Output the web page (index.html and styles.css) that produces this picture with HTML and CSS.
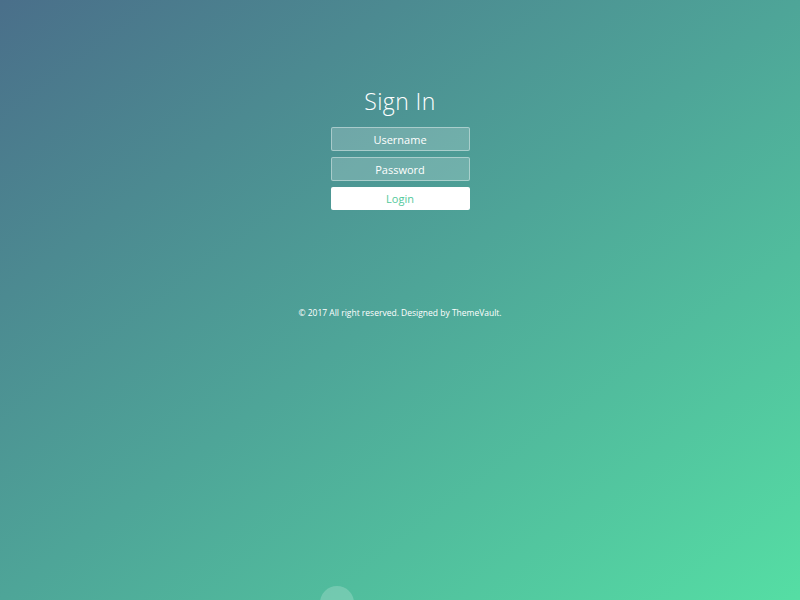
FILE: index.html
```html
<!DOCTYPE html>
<html lang="en">
<head>
<meta charset="utf-8">
<title>Sign In</title>
<link rel="stylesheet" href="styles.css">
</head>
<body>
<div class="page">
  <div class="container">
    <h1 class="title">Sign In</h1>
    <form class="form">
      <input class="field" type="text" placeholder="Username">
      <input class="field" type="password" placeholder="Password">
      <button class="login" type="button">Login</button>
    </form>
    <p class="footer">© 2017 All right reserved. Designed by ThemeVault.</p>
  </div>
  <span class="bubble"></span>
</div>
</body>
</html>
```

FILE: styles.css
```css
html, body {
  margin: 0;
  padding: 0;
  height: 100%;
}
body {
  font-family: "Open Sans", "Lato", sans-serif;
  color: #fff;
}
.page {
  position: relative;
  height: 600px;
  overflow: hidden;
  background: linear-gradient(to bottom right, #4a6f8a 0%, #4ea598 50%, #55dea4 100%);
}
.container {
  display: flex;
  flex-direction: column;
  align-items: center;
  padding-top: 85px;
}
.title {
  margin: 0 0 10px;
  font-size: 23px;
  font-weight: 300;
  line-height: 32px;
  letter-spacing: 0.4px;
}
.form {
  display: flex;
  flex-direction: column;
  gap: 6px;
  width: 139px;
}
.field {
  box-sizing: border-box;
  height: 24px;
  width: 100%;
  padding: 0 8px;
  border: 1px solid rgba(255,255,255,0.4);
  border-radius: 2px;
  background: rgba(255,255,255,0.2);
  font-family: inherit;
  font-size: 11px;
  color: #fff;
  text-align: center;
  outline: none;
}
.field::placeholder {
  color: #fff;
  opacity: 1;
}
.login {
  box-sizing: border-box;
  height: 23px;
  width: 100%;
  border: 0;
  border-radius: 2px;
  background: #fff;
  color: #53c99b;
  font-family: inherit;
  font-size: 11px;
  cursor: pointer;
}
.footer {
  margin: 97px 0 0;
  font-size: 8.5px;
  line-height: 12px;
}
.bubble {
  position: absolute;
  left: 320px;
  top: 586px;
  width: 34px;
  height: 34px;
  border-radius: 50%;
  background: rgba(255,255,255,0.2);
}
```
